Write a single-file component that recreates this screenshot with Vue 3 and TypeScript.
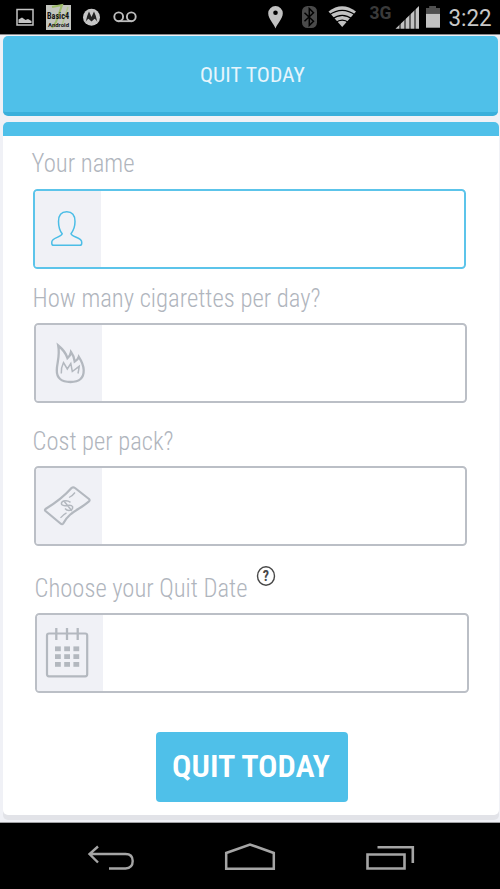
<script setup lang="ts">
import { ref } from 'vue'

interface Field {
  id: string
  label: string
  width: number
  active?: boolean
  help?: boolean
}

const fields: Field[] = [
  { id: 'name', label: 'Your name', width: 103, active: true },
  { id: 'amount', label: 'How many cigarettes per day?', width: 288 },
  { id: 'cost', label: 'Cost per pack?', width: 141 },
  { id: 'date', label: 'Choose your Quit Date', width: 213, help: true },
]

const values = ref<Record<string, string>>({ name: '', amount: '', cost: '', date: '' })
const gaps = [1, 2, 3, 4]
const cells = [0, 1, 2]
</script>

<template>
  <div class="screen">
    <header class="status">
      <svg viewBox="0 0 40 34" width="40" height="34">
        <rect x="17" y="9.5" width="16" height="15.5" fill="none" stroke="#c4c4c4" stroke-width="1.5" />
        <path d="M18.500 23v-3.500l3.500-2 3.500 2.500 2.500-1 3.500 2v2z" fill="#c4c4c4" />
      </svg>
      <svg viewBox="40 0 36 34" width="36" height="34">
        <rect x="46" y="5" width="25" height="25" fill="#c3c5bf" />
        <path d="M52 7l10-2-6 17-4 6" fill="none" stroke="#9dbb69" stroke-width="2" />
        <path d="M62 25l6-18" fill="none" stroke="#b1c78d" stroke-width="1.5" />
        <text class="basic" x="47" y="19.300" textLength="22" lengthAdjust="spacingAndGlyphs">Basic4</text>
        <text class="android" x="48" y="27" textLength="21" lengthAdjust="spacingAndGlyphs">Android</text>
      </svg>
      <svg viewBox="76 0 32 34" width="32" height="34">
        <circle cx="91.5" cy="17.3" r="8.5" fill="#c6c6c6" />
        <path d="M85.700 22q1-6 3.300-10.500l2.500 5.500 2.500-5.500q2.300 4.500 3.300 10.500-1-2.500-2.800-3.200l-3 2.700-3-2.700q-1.800.7-2.800 3.200z" fill="#222" />
      </svg>
      <svg viewBox="108 0 142 34" width="142" height="34">
        <path d="M118.500 21.200h13" stroke="#bdbdbd" stroke-width="1.800" />
        <circle cx="118.700" cy="16.800" r="4.400" fill="none" stroke="#bdbdbd" stroke-width="1.900" />
        <circle cx="131.300" cy="16.800" r="4.400" fill="none" stroke="#bdbdbd" stroke-width="1.900" />
      </svg>
      <svg viewBox="250 0 250 34" width="250" height="34">
        <path d="M275.500 28.500c-1-4-7.300-9.500-7.300-15.200a7.300 7.300 0 0 1 14.600 0c0 5.700-6.300 11.200-7.300 15.200zM275.500 10.500a2.300 2.300 0 1 0 0 4.600 2.300 2.300 0 0 0 0-4.600z" fill="#c2c2c2" fill-rule="evenodd" />
        <rect x="302" y="6" width="15" height="22" rx="5.500" fill="#4a4a4a" />
        <path d="M304.500 12.800l9 8.400-4.200 4.300V8.500l4.200 4.300-9 8.400" fill="none" stroke="#000" stroke-width="1.500" />
        <path d="M328.500 11.500q13.500-10.500 27.500 0L342.200 27z" fill="#c2c2c2" />
        <path d="M329 15.200q13.200-9.500 26.400 0M332 19q10.200-7.400 20.400 0M335.500 22.700q6.700-5 13.400 0" fill="none" stroke="#000" stroke-width="1.300" />
        <text class="network" x="369.500" y="18.800" textLength="22" lengthAdjust="spacingAndGlyphs">3G</text>
        <path d="M395.500 28.700L419 6v22.700z" fill="#c2c2c2" />
        <path v-for="n in gaps" :key="n" :d="`M${395 + n * 5} 5v24`" stroke="#000" stroke-width="1" />
        <path d="M426 13.800V8h3.200V6h6.800v2h4v5.800z" fill="#505050" />
        <rect x="426" y="13.800" width="14" height="13.900" fill="#c2c2c2" />
        <text class="clock" x="448.500" y="26" textLength="43" lengthAdjust="spacingAndGlyphs">3:22</text>
      </svg>
    </header>

    <main class="page">
      <div class="title">
        <svg width="106" height="26" viewBox="0 0 106 26">
          <text class="title-text" x="0" y="20" textLength="105" lengthAdjust="spacingAndGlyphs">QUIT TODAY</text>
        </svg>
      </div>

      <form class="card" @submit.prevent>
        <div v-for="f in fields" :key="f.id" class="field" :class="[f.id, { active: f.active }]">
          <label class="caption" :for="f.id">
            <svg :width="f.width + 1" height="30" :viewBox="`0 0 ${f.width + 1} 30`">
              <text class="label-text" x="-0.5" y="23" :textLength="f.width" lengthAdjust="spacingAndGlyphs">{{ f.label }}</text>
            </svg>
            <svg v-if="f.help" class="help" width="20" height="22" viewBox="0 0 20 22">
              <ellipse cx="10" cy="11" rx="8.500" ry="9.300" fill="none" stroke="#484848" stroke-width="1.400" />
              <text class="help-text" x="10" y="15.800" text-anchor="middle">?</text>
            </svg>
          </label>
          <div class="box">
            <span class="addon">
              <svg v-if="f.id === 'name'" viewBox="35 191 66 76" width="66" height="76">
                <path d="M62.200 233.800C59.500 230.500 58.500 227 58.500 221.500C58.500 215 61 211.700 66.700 211.700S75 215 75 221.500C75 227 73.500 230.500 71 233.800C72.500 237.500 81.700 237.500 81.700 242V243.500Q81.700 245.300 79.800 245.300H53.700Q51.800 245.300 51.800 243.500V242C51.800 237.500 61 237.500 62.200 233.800Z" fill="none" stroke="#4bbde6" stroke-width="1.500" stroke-linejoin="round" />
              </svg>
              <svg v-else-if="f.id === 'amount'" viewBox="36 325 66 76" width="66" height="76">
                <path d="M58.200 345.500Q65.500 351.500 67.500 358.200Q70.500 355.500 71 352Q74 356 74.700 361.500Q78 359.500 78.800 356.800Q83.500 364 83.700 370Q84 382 70.500 382Q56.500 382 56.800 370C57 362 60.200 356 58.200 345.500Z" fill="none" stroke="#b3b8bf" stroke-width="2.300" />
                <path d="M61.300 373.500Q61 367.500 63.500 362.500L67.300 369L70.800 363.500L72.300 371.500L79.200 366.300Q78.700 370 78 373.500" fill="none" stroke="#b3b8bf" stroke-width="1.500" />
              </svg>
              <svg v-else-if="f.id === 'cost'" viewBox="36 468 66 76" width="66" height="76">
                <path d="M45.500 509C57 502 64 496.500 71.500 488Q73.200 486.600 75 488L89 499Q90.300 500.500 88.700 501.700C79 510 69 512 63.200 523.500Q62.200 525 60.500 523.500L45.500 511Q44.500 510 45.500 509Z" fill="none" stroke="#b3b8bf" stroke-width="2.200" stroke-linejoin="round" />
                <path d="M69 497.500q3.500-1.500 6-5M60.500 517.800q3-3.500 6-5" fill="none" stroke="#b3b8bf" stroke-width="1.300" />
                <path d="M70.500 502.300C66 499 59.500 501.500 62 504.800C65 507.500 70.500 503 72.500 506.500C73.500 511 67.500 511.500 65 508.500M63.500 500.500l8.500 10.500" fill="none" stroke="#b3b8bf" stroke-width="1.500" />
              </svg>
              <svg v-else viewBox="37 615 66 76" width="66" height="76">
                <rect x="47" y="633.500" width="40.200" height="42.800" rx="2" fill="none" stroke="#b3b8bf" stroke-width="2.200" />
                <path d="M56.300 628v12M67 628v12M77.700 628v12" stroke="#b3b8bf" stroke-width="2.300" />
                <template v-for="r in cells" :key="r">
                  <rect v-for="c in cells" :key="c" :x="55 + c * 9.200" :y="646.400 + r * 7.800" width="5.800" height="4.800" fill="#b3b8bf" />
                </template>
              </svg>
            </span>
            <input :id="f.id" v-model="values[f.id]" class="entry" type="text" />
          </div>
        </div>

        <button class="submit" type="submit">
          <svg width="160" height="40" viewBox="0 0 160 40">
            <text class="submit-text" x="0" y="30" textLength="158" lengthAdjust="spacingAndGlyphs">QUIT TODAY</text>
          </svg>
        </button>
      </form>
    </main>

    <nav class="nav">
      <svg viewBox="80 840 60 36" width="60" height="36">
        <path d="M89.500 854H125.500Q132.700 854 132.700 861T125.500 868.500H109M98 846.500L89.500 854L98 862.500" fill="none" stroke="#a5a5a5" stroke-width="2.400" />
      </svg>
      <svg viewBox="220 840 60 36" width="60" height="36">
        <path d="M226.200 868.700V853L250 844.500L273.800 853V868.700Z" fill="none" stroke="#a5a5a5" stroke-width="2.500" />
      </svg>
      <svg viewBox="360 840 60 36" width="60" height="36">
        <path d="M367.500 854.500H404.500V868.500H367.500ZM377.500 847.300H412.800V863" fill="none" stroke="#a5a5a5" stroke-width="2.600" />
      </svg>
    </nav>
  </div>
</template>

<style>
body {
  margin: 0;
  background: #000;
}
</style>

<style scoped>
.screen {
  width: 500px;
  height: 889px;
  display: flex;
  flex-direction: column;
  overflow: hidden;
  font-family: 'Roboto Condensed', Roboto, sans-serif;
  background: #000;
}
svg {
  display: block;
  flex: none;
  overflow: visible;
}
.status {
  display: flex;
  height: 34px;
  background: #000;
}
.basic {
  font: 700 9px 'Roboto Condensed', Roboto, sans-serif;
  fill: #111;
}
.android {
  font: 700 6px Roboto, sans-serif;
  fill: #111;
}
.network {
  font: 700 17.500px Roboto, sans-serif;
  fill: #3a3a3a;
}
.clock {
  font: 400 23px Roboto, sans-serif;
  fill: #c8c8c8;
}
.page {
  box-sizing: border-box;
  height: 789px;
  padding: 1px 1.5px 0 2.5px;
  border-top: 1px solid #8b8b8d;
  border-bottom: 1px solid #a0a1a4;
  background: #f0f1f6;
  display: flex;
  flex-direction: column;
  gap: 6px;
}
.title {
  box-sizing: border-box;
  height: 80px;
  width: 495px;
  padding: 26px 0 0 5px;
  display: flex;
  justify-content: center;
  background: #4fc0e9;
  border-bottom: 4px solid #3aafdb;
  border-radius: 5px;
}
.title-text {
  font-size: 20.5px;
  font-weight: 400;
  fill: #e7f5fc;
}
.card {
  box-sizing: border-box;
  width: 495.5px;
  height: 693px;
  margin-left: 0.5px;
  padding: 13px 0 0 29px;
  border-top: 14px solid #4fc0e9;
  border-radius: 5px;
  background: #fff;
  box-shadow: 0 5px 0 #e2e3e8;
  display: flex;
  flex-direction: column;
}
.field {
  width: 435px;
}
.name .caption {
  height: 40px;
}
.amount {
  margin: 15px 0 0 1px;
}
.cost {
  margin: 24px 0 0 1px;
}
.date {
  margin: 28px 0 0 2.500px;
}
.caption {
  display: flex;
  height: 39px;
}
.help {
  margin: -9.500px 0 0 7px;
}
.label-text {
  font-size: 25.500px;
  font-weight: 300;
  fill: #b0b5bd;
}
.help-text {
  font-size: 14px;
  font-weight: 700;
  fill: #484848;
}
.box {
  box-sizing: border-box;
  width: 433.500px;
  height: 80px;
  display: flex;
  margin-left: 0.5px;
  border: 2px solid #bbbfc6;
  border-radius: 4.500px;
  background: #fff;
  overflow: hidden;
}
.active .box {
  border-color: #5cc4ea;
}
.addon {
  flex: none;
  width: 66px;
  background: #f0f1f6;
}
.entry {
  flex: 1;
  min-width: 0;
  padding: 0 12px;
  border: 0;
  outline: 0;
  background: transparent;
  font: 300 24px Roboto, sans-serif;
}
.submit {
  width: 192px;
  height: 70px;
  margin: 39px 0 0 123.500px;
  padding: 0 0 0 16px;
  border: 0;
  border-radius: 4px;
  background: #4fc0e9;
}
.submit-text {
  font: 600 32px 'Roboto Condensed', Roboto, sans-serif;
  fill: #fff;
}
.nav {
  flex: 1;
  display: flex;
  gap: 80px;
  padding: 17px 0 0 80px;
  background: #000;
}
</style>
